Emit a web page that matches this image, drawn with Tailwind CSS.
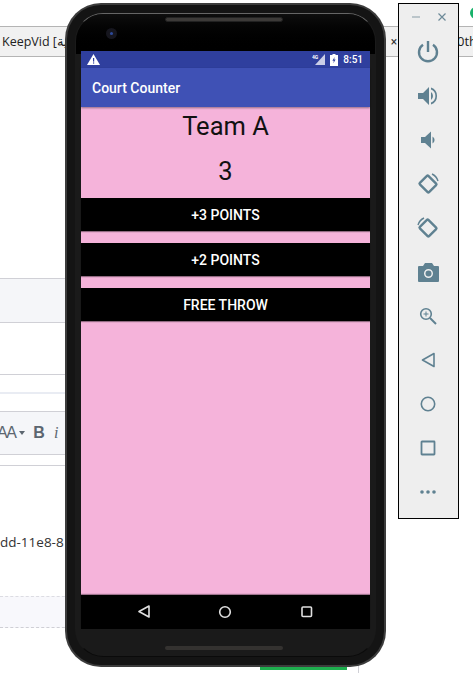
<!DOCTYPE html>
<html><head><meta charset="utf-8"><script src="https://cdn.jsdelivr.net/npm/@tailwindcss/browser@4"></script></head>
<body class="bg-white">
<div class="relative w-[473px] h-[673px] overflow-hidden bg-white font-['Roboto',sans-serif]">
  <!-- browser behind -->
  <div class="absolute left-0 top-[26px] w-[473px] h-[31px] bg-[#f1f1f1] border-y border-[#b4b4b4]"></div>
  <div class="absolute left-[2px] top-[33px] text-[12.500px] leading-[17px] text-[#222] font-['Open_Sans','Noto_Sans',sans-serif] whitespace-nowrap">KeepVid [ﻣﻴﺔ</div>
  <div class="absolute left-[390px] top-[34px] w-[8px] text-[12px] leading-[16px] text-[#333] text-center">×</div>
  <div class="absolute left-[457px] top-[33px] w-[16px] overflow-hidden text-[13px] leading-[17px] text-[#222] font-['Open_Sans',sans-serif]">0th</div>
  <div class="absolute left-[470px] top-[7px] w-[12px] h-[12px] rounded-full bg-[#17b26a]"></div>
  <div class="absolute left-0 top-[278px] w-[70px] h-[45px] bg-[#f5f6f9] border-y border-[#d0d0d6]"></div>
  <div class="absolute left-0 top-[374px] w-[70px] h-[20px] border-t border-[#d0d0d6] border-b-2 border-b-[#e9ecf3]"></div>
  <div class="absolute left-0 top-[411px] w-[70px] h-[44px] bg-[#f5f6f9] border-y border-[#d0d0d6]"></div>
  <div class="absolute left-0 top-[423px] h-[20px] w-[64px] flex items-center text-[#5c6670] font-['Liberation_Sans',sans-serif] whitespace-nowrap overflow-hidden">
    <span class="text-[16px] tracking-[-1.500px] -ml-[3px]">AA</span>
    <span class="ml-[4px] w-0 h-0 border-x-[3.500px] border-x-transparent border-t-[4px] border-t-[#5c6670]"></span>
    <span class="ml-[8px] text-[16px] font-bold">B</span>
    <span class="ml-[9px] text-[16px] italic font-['Liberation_Serif',serif]">i</span>
  </div>
  <div class="absolute left-0 top-[465px] w-[70px] border-t border-[#d0d0d6]"></div>
  <div class="absolute left-0 top-[533px] text-[13.500px] leading-[18px] text-[#333] font-['Open_Sans',sans-serif] whitespace-nowrap">dd-11e8-8</div>
  <div class="absolute left-0 top-[596px] w-[70px] h-[32px] bg-[#f8f8fc] border-t border-dashed border-t-[#dcdce2] border-b border-b-[#cfcfd5]"></div>
  <div class="absolute left-[260px] top-[664px] w-[87px] h-[6px] bg-[#1eae4e]"></div>
  <div class="absolute left-[358px] top-[660px] h-[13px] border-l border-[#d0d0d6]"></div>

  <!-- phone -->
  <div class="absolute left-[65px] top-[3px] w-[321px] h-[664px] rounded-[36px] bg-[#3c3c3c] p-[2px]">
    <div class="relative w-full h-full rounded-[34px] bg-[#141414] overflow-hidden">
      <div class="absolute inset-[8px] rounded-[28px] border border-transparent border-t-[#666] border-b-[#0a0a0a] bg-[#1a1a1a] overflow-hidden">
        <div class="absolute inset-x-0 top-0 h-[40px] bg-gradient-to-b from-[#0e0e0e] to-[#000]"></div>
        <div class="absolute left-[89px] top-[3px] w-[118px] h-[5px] rounded-full bg-[#3c3a38] border border-[#222]"></div>
        <div class="absolute left-[30px] top-[14px] w-[11px] h-[11px] rounded-full bg-[#16161e] flex items-center justify-center"><span class="w-[3px] h-[3px] rounded-full bg-[#2d4a9a]"></span></div>
        <div class="absolute left-[89px] bottom-[6px] w-[118px] h-[4px] rounded-full bg-[#343230]"></div>
      </div>
    </div>
  </div>

  <!-- screen -->
  <div class="absolute left-[81px] top-[51px] w-[289px] h-[578px] bg-[#f5b3da] flex flex-col">
    <div class="h-[17px] shrink-0 bg-[#2f3f9e] flex items-center text-white pl-[6px] pr-[7px]">
      <svg width="13" height="11" viewBox="0 0 13 11"><path d="M6.500 0 13 11H0Z" fill="#fff"/><rect x="6" y="4" width="1.200" height="3.600" fill="#2f3f9e"/><rect x="6" y="8.400" width="1.200" height="1.200" fill="#2f3f9e"/></svg>
      <span class="flex-1"></span>
      <svg width="13" height="11" viewBox="0 0 13 11"><path d="M13 0V11H3Z" fill="#fff" opacity=".75"/><text x="0" y="5" font-size="5" font-weight="700" fill="#fff" font-family="Roboto">4G</text></svg>
      <svg class="ml-[5px]" width="8" height="12" viewBox="0 0 8 12"><path d="M2.500 0h3v1H8v11H0V1h2.500Z" fill="#fff"/><path d="M4.600 3 2.400 6.800h1.400l-.4 2.400 2.200-3.800H4.200Z" fill="#2f3f9e"/></svg>
      <span class="ml-[5px] text-[10px] leading-[12px] font-medium">8:51</span>
    </div>
    <div class="h-[39px] shrink-0 bg-[#3f51b5] shadow-[0_1px_2px_rgba(0,0,0,.4)] flex items-center pl-[11px] pt-[2px] text-white text-[14px] font-medium">Court Counter</div>
    <div class="h-[91px] shrink-0 flex flex-col items-center text-[#111]">
      <div class="text-[25.500px] leading-[28px] mt-[5px]">Team A</div>
      <div class="text-[25.500px] leading-[28px] mt-[17px]">3</div>
    </div>
    <div class="h-[33px] shrink-0 bg-black flex items-center justify-center pt-[2px] text-white text-[14px] font-medium shadow-[0_1px_1px_rgba(0,0,0,.4)]">+3 POINTS</div>
    <div class="h-[33px] shrink-0 mt-[12px] bg-black flex items-center justify-center pt-[2px] text-white text-[14px] font-medium shadow-[0_1px_1px_rgba(0,0,0,.4)]">+2 POINTS</div>
    <div class="h-[33px] shrink-0 mt-[12px] bg-black flex items-center justify-center pt-[2px] text-white text-[14px] font-medium shadow-[0_1px_1px_rgba(0,0,0,.4)]">FREE THROW</div>
    <div class="flex-1"></div>
    <div class="h-[34px] shrink-0 bg-black shadow-[0_-1px_1px_rgba(0,0,0,.35)] relative flex items-center text-[#e0e0e0]">
      <svg class="absolute left-[56px] top-[9px]" width="14" height="15" viewBox="0 0 14 15" fill="none" stroke="currentColor" stroke-width="1.600" stroke-linejoin="round"><path d="M12 2 2 7.500 12 13Z"/></svg>
      <svg class="absolute left-[137px] top-[10px]" width="14" height="14" viewBox="0 0 14 14" fill="none" stroke="currentColor" stroke-width="1.600"><circle cx="7" cy="7" r="5.300"/></svg>
      <svg class="absolute left-[219px] top-[10px]" width="13" height="13" viewBox="0 0 13 13" fill="none" stroke="currentColor" stroke-width="1.600"><rect x="2" y="2" width="9.500" height="9.500" rx="1"/></svg>
    </div>
  </div>

  <!-- emulator toolbar -->
  <div class="absolute left-[398px] top-[3px] w-[61px] h-[516px] bg-[#eeeeee] border-[1.500px] border-black flex flex-col items-center text-[#5f8191]">
    <div class="w-full h-[26px] shrink-0 flex items-center justify-center gap-[18px] text-[#6d8a98]">
      <svg width="8" height="8" viewBox="0 0 8 8"><path d="M0 4h8" stroke="#9aaab3" stroke-width="1.200"/></svg>
      <svg width="8" height="8" viewBox="0 0 8 8"><path d="M.5.5l7 7M7.500.5l-7 7" stroke="currentColor" stroke-width="1.200"/></svg>
    </div>
    <div class="w-full flex flex-col items-center -ml-[1px]">
      <div class="h-[44px] w-full flex items-center justify-center"><svg width="22" height="24" viewBox="0 0 22 24" fill="none" stroke="currentColor" stroke-width="2.400"><path d="M11 1v11"/><path d="M6 4.800a9 9 0 1 0 10 0"/></svg></div>
      <div class="h-[44px] w-full flex items-center justify-center"><svg width="22" height="20" viewBox="0 0 22 20" fill="currentColor"><path d="M1 7h5l6-6v18l-6-6H1Z"/><path d="M14 6a5 5 0 0 1 0 8Z"/><path d="M14 1.500a9 9 0 0 1 0 17v-2a7 7 0 0 0 0-13Z"/></svg></div>
      <div class="h-[44px] w-full flex items-center justify-center"><svg width="16" height="18" viewBox="0 0 16 18" fill="currentColor"><path d="M1 6h4l6-5.500v17L5 12H1Z"/><path d="M12.500 5.500a4 4 0 0 1 0 7Z"/></svg></div>
      <div class="h-[44px] w-full flex items-center justify-center"><svg width="24" height="24" viewBox="0 0 24 24" fill="none" stroke="currentColor"><rect x="5.500" y="6" width="13" height="12" rx="1" stroke-width="2.400" transform="rotate(45 12 12)"/><path d="M16 2a11 11 0 0 1 6 7" stroke-width="1.400"/></svg></div>
      <div class="h-[44px] w-full flex items-center justify-center"><svg width="24" height="24" viewBox="0 0 24 24" fill="none" stroke="currentColor"><rect x="5.500" y="6" width="13" height="12" rx="1" stroke-width="2.400" transform="rotate(45 12 12)"/><path d="M8 2a11 11 0 0 0-6 7" stroke-width="1.400"/></svg></div>
      <div class="h-[44px] w-full flex items-center justify-center"><svg width="21" height="19" viewBox="0 0 21 19" fill="currentColor"><path fill-rule="evenodd" d="M7 0h7l2 3h4a1 1 0 0 1 1 1v14a1 1 0 0 1-1 1H1a1 1 0 0 1-1-1V4a1 1 0 0 1 1-1h4Zm3.500 6a4.500 4.500 0 1 0 0 9 4.500 4.500 0 0 0 0-9Z"/><circle cx="10.500" cy="10.500" r="3"/></svg></div>
      <div class="h-[44px] w-full flex items-center justify-center"><svg width="18" height="18" viewBox="0 0 18 18" fill="none" stroke="currentColor"><circle cx="7" cy="7" r="5.300" stroke-width="1.600"/><path d="M11 11l6 6" stroke-width="2"/><path d="M7 4.500v5M4.500 7h5" stroke-width="1"/></svg></div>
      <div class="h-[44px] w-full flex items-center justify-center"><svg width="14" height="16" viewBox="0 0 14 16" fill="none" stroke="currentColor" stroke-width="1.600" stroke-linejoin="round"><path d="M13 1.500 1.500 8 13 14.500Z"/></svg></div>
      <div class="h-[44px] w-full flex items-center justify-center"><svg width="16" height="16" viewBox="0 0 16 16" fill="none" stroke="currentColor" stroke-width="1.600"><circle cx="8" cy="8" r="6.700"/></svg></div>
      <div class="h-[44px] w-full flex items-center justify-center"><svg width="16" height="16" viewBox="0 0 16 16" fill="none" stroke="currentColor" stroke-width="1.800"><rect x="1.500" y="1.500" width="13" height="13" rx=".5"/></svg></div>
      <div class="h-[44px] w-full flex items-center justify-center"><svg width="16" height="4" viewBox="0 0 16 4" fill="currentColor"><circle cx="2" cy="2" r="1.800"/><circle cx="8" cy="2" r="1.800"/><circle cx="14" cy="2" r="1.800"/></svg></div>
    </div>
  </div>
</div>
</body></html>
